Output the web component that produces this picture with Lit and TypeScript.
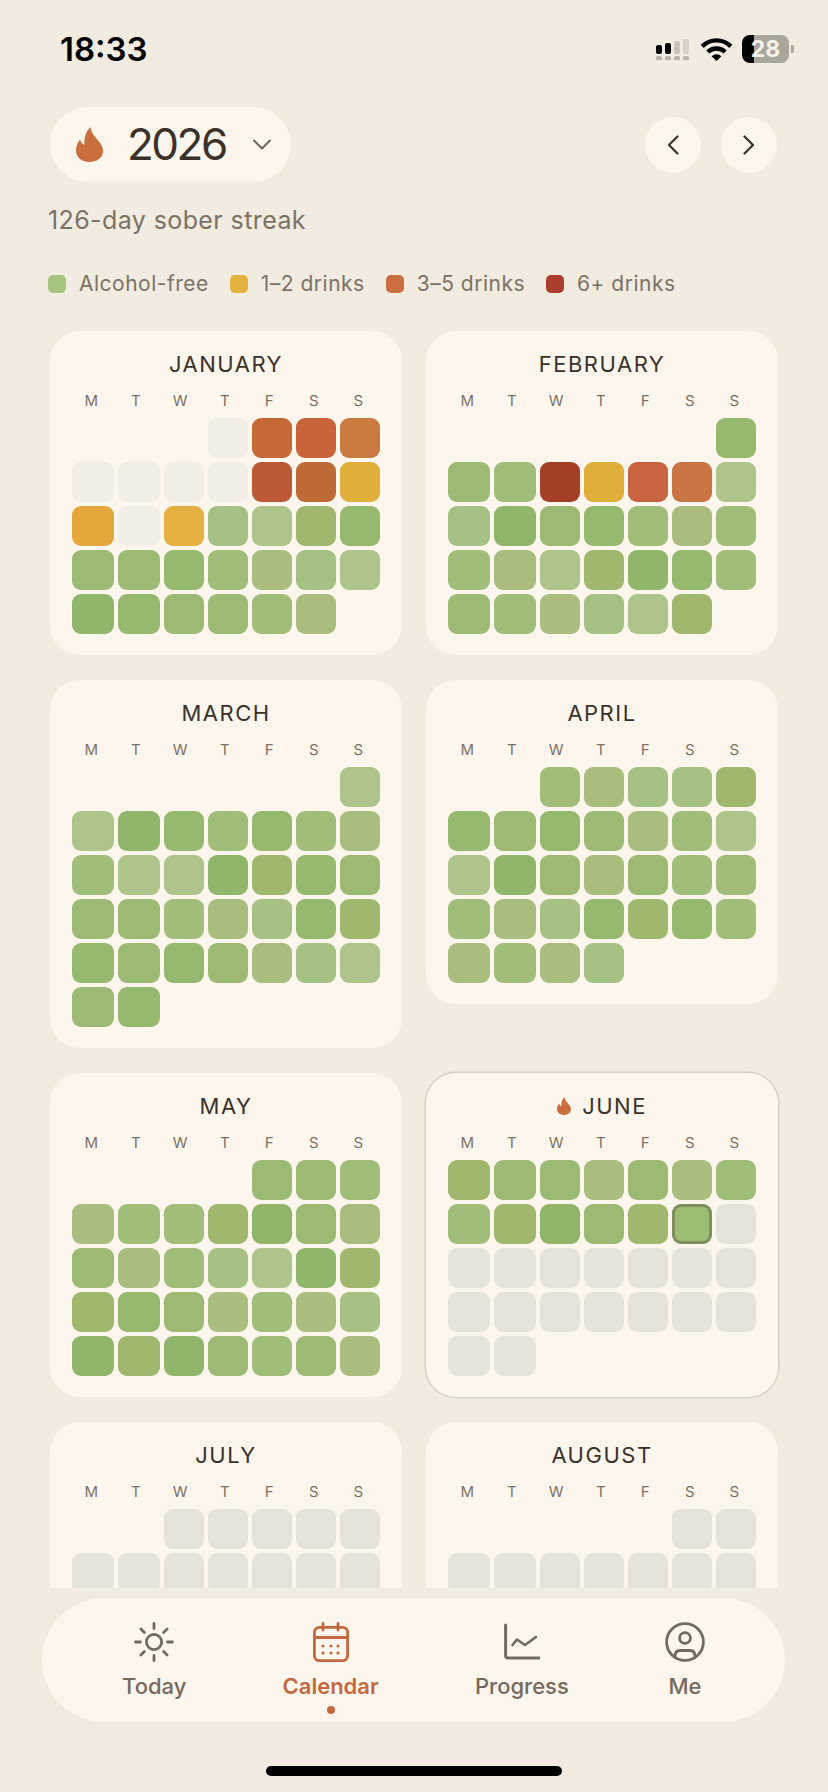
import { LitElement, html, css, svg } from "lit";
import { customElement } from "lit/decorators.js";

const SHADES: Record<string, string> = {
  a: "#8fb66b", b: "#96b86f", c: "#9cba74", d: "#a1bd7a", e: "#a6c184", f: "#adc58a", g: "#9fb86d", h: "#a9bd7f",
  "1": "#c56a36", "2": "#c9633a", "3": "#c97a41", "4": "#bb5a35", "5": "#bd6a36",
  "6": "#e0ae3a", "7": "#e5a83d", "8": "#e7b043", "9": "#a23f26", "0": "#c96340", y: "#c97543",
  x: "#f2eee6", z: "#e6e4da", J: "#9dbc74",
};

// one string per week, monday first. "." is a slot outside the month, J is today
const MONTHS = [
  { name: "JANUARY", weeks: ["...x123", "xxxx456", "7x8efgb", "ccbdhef", "abccdh."] },
  { name: "FEBRUARY", weeks: ["......b", "cd960yf", "eacbdhd", "dhfgabd", "cdhefg."] },
  { name: "MARCH", weeks: ["......f", "fabdbdh", "dffagbc", "ccdhebg", "bcbchef", "cb....."] },
  { name: "APRIL", weeks: ["..dheeg", "bcbchdf", "fachcdd", "dhebgbd", "hdhe..."] },
  { name: "MAY", weeks: ["....ccd", "hddgach", "chdefag", "gbchdhe", "agacdch"] },
  { name: "JUNE", current: true, weeks: ["gcchchd", "dgacgJz", "zzzzzzz", "zzzzzzz", "zz....."] },
  { name: "JULY", weeks: ["..zzzzz", "zzzzzzz", "zzzzzzz", "zzzzzzz", "zzzzz.."] },
  { name: "AUGUST", weeks: [".....zz", "zzzzzzz", "zzzzzzz", "zzzzzzz", "zzzzzzz", "z......"] },
];

const DAYS = ["M", "T", "W", "T", "F", "S", "S"];

const FLAME = svg`<path fill="#c96f3e" d="M14.5 0C15 6 19 9.5 23 14.5C25.8 18 27 21 27 24C27 30.5 21 35 13.5 35C6 35 0 30.5 0 23.5C0 19.5 1.5 15.5 4 12.5C4.8 15 6 17 8.6 18C7.6 12 9.5 5 14.5 0Z"/>`;

const LEGEND = [
  ["#a5c47f", "Alcohol-free"],
  ["#e4b23c", "1–2 drinks"],
  ["#cb6f41", "3–5 drinks"],
  ["#ac3c2b", "6+ drinks"],
];

@customElement("app-root")
export class AppRoot extends LitElement {
  static styles = css`
    :host {
      display: flex;
      flex-direction: column;
      height: 1792px;
      overflow: hidden;
      background: #f2ebdf;
      font-family: Inter, "Liberation Sans", sans-serif;
      color: #3a322a;
    }
    .status {
      display: flex;
      justify-content: space-between;
      align-items: center;
      height: 28px;
      margin: 35px 34px 44px 60px;
    }
    .time {
      font-size: 33px;
      font-weight: 600;
      color: #000;
    }
    .status-icons {
      display: flex;
      align-items: center;
      gap: 9px;
    }
    .battery {
      display: flex;
      align-items: center;
      gap: 2px;
    }
    .battery-body {
      width: 47px;
      height: 28px;
      border-radius: 8px;
      background: linear-gradient(90deg, #000 26%, #aba69c 26%);
      color: #f6f2ea;
      font-size: 23px;
      font-weight: 700;
      line-height: 28px;
      text-align: center;
    }
    .battery-nub {
      width: 3px;
      height: 8px;
      border-radius: 0 2px 2px 0;
      background: #aba69c;
    }
    .head {
      display: flex;
      justify-content: space-between;
      align-items: center;
      height: 75px;
      padding: 0 51px 0 50px;
    }
    .pill {
      display: flex;
      align-items: center;
      width: 241px;
      height: 75px;
      box-sizing: border-box;
      padding-left: 26px;
      border-radius: 38px;
      background: #fcf6ed;
    }
    .year {
      margin: 0 27px 0 24px;
      font-size: 44px;
      letter-spacing: -2.5px;
      line-height: 75px;
    }
    .nav {
      display: flex;
      gap: 20px;
    }
    .round {
      display: flex;
      align-items: center;
      justify-content: center;
      width: 56px;
      height: 56px;
      border-radius: 50%;
      background: #fcf6ed;
    }
    .sub {
      margin: 23px 0 0 48px;
      font-size: 25px;
      letter-spacing: 0.4px;
      line-height: 30px;
      color: #7b7266;
    }
    .legend {
      display: flex;
      gap: 21px;
      margin: 37px 0 35px 48px;
      font-size: 21px;
      letter-spacing: 0.5px;
      line-height: 24px;
      color: #7b7266;
    }
    .legend-item {
      display: flex;
      align-items: center;
      gap: 13px;
    }
    .swatch {
      width: 18px;
      height: 18px;
      border-radius: 5px;
    }
    .scroll {
      flex: 1;
      min-height: 0;
      overflow: hidden;
      padding: 0 50px;
    }
    .months {
      display: grid;
      grid-template-columns: 352px 352px;
      column-gap: 24px;
      row-gap: 25px;
      align-items: start;
    }
    .card {
      box-sizing: border-box;
      padding: 20px 22px 21px;
      border-radius: 30px;
      background: #fcf6ed;
    }
    .card.current {
      box-shadow: 0 0 0 1.5px #d9d0c4;
    }
    .title {
      display: flex;
      align-items: center;
      justify-content: center;
      gap: 11px;
      height: 26px;
      font-size: 22px;
      letter-spacing: 1.5px;
    }
    .days {
      display: grid;
      grid-template-columns: repeat(7, 44.5px);
      margin: 14px 0 0 -3px;
      font-size: 15px;
      line-height: 20px;
      text-align: center;
      color: #7b7266;
    }
    .cells {
      display: grid;
      grid-template-columns: 42px 42px repeat(5, 40px);
      grid-auto-rows: 40px;
      gap: 4px;
      margin-top: 7px;
    }
    .cell {
      box-sizing: border-box;
      border-radius: 9px;
    }
    .cell.today {
      border: 3px solid #7a8f5c;
    }
    .tabs {
      display: flex;
      justify-content: space-between;
      align-items: flex-start;
      flex: none;
      height: 124px;
      box-sizing: border-box;
      margin: 10px 43px 0 42px;
      padding: 24px 80px 0 80px;
      border-radius: 62px;
      background: #fcf6ed;
    }
    .tab {
      display: flex;
      flex-direction: column;
      align-items: center;
      color: #736a5e;
      font-size: 22px;
      font-weight: 500;
      line-height: 26px;
    }
    .tab svg {
      margin-bottom: 11px;
    }
    .tab.active {
      color: #c4693f;
      font-weight: 600;
    }
    .dot {
      width: 8px;
      height: 8px;
      margin-top: 7px;
      border-radius: 50%;
      background: #c4693f;
    }
    .home {
      flex: none;
      width: 296px;
      height: 10px;
      margin: 44px 0 16px 266px;
      border-radius: 5px;
      background: #000;
    }
  `;

  renderMonth(m: (typeof MONTHS)[number]) {
    return html`
      <section class="card ${m.current ? "current" : ""}">
        <div class="title">
          ${m.current ? html`<svg width="14" height="18" viewBox="0 0 27 35">${FLAME}</svg>` : ""}
          <span>${m.name}</span>
        </div>
        <div class="days">${DAYS.map((d) => html`<span>${d}</span>`)}</div>
        <div class="cells">
          ${m.weeks.flatMap((w) => [...w]).map((c) =>
            c === "."
              ? html`<span></span>`
              : html`<span class="cell ${c === "J" ? "today" : ""}" style="background:${SHADES[c]}"></span>`
          )}
        </div>
      </section>
    `;
  }

  render() {
    return html`
      <div class="status">
        <span class="time">18:33</span>
        <div class="status-icons">
          <svg width="35" height="21" viewBox="0 0 35 21">
            <rect x="0" y="6" width="6" height="9" rx="2" fill="#000"/>
            <rect x="9" y="4" width="6" height="11" rx="2" fill="#000"/>
            <rect x="18" y="2" width="6" height="13" rx="2" fill="#c9c4ba"/>
            <rect x="27" y="0" width="6" height="15" rx="2" fill="#d6d1c7"/>
            <rect x="0" y="17" width="6" height="5" rx="1.5" fill="#b9b4aa"/>
            <rect x="9" y="17" width="6" height="5" rx="1.5" fill="#b9b4aa"/>
            <rect x="18" y="17" width="6" height="5" rx="1.5" fill="#b9b4aa"/>
            <rect x="27" y="17" width="6" height="5" rx="1.5" fill="#b9b4aa"/>
          </svg>
          <svg width="33" height="24" viewBox="0 0 33 24" fill="none" stroke="#000" stroke-width="4.4">
            <path d="M2.2 9.4A20 20 0 0 1 30.8 9.4"/>
            <path d="M7.8 15A12.4 12.4 0 0 1 25.2 15"/>
            <path d="M11.6 19.2A7 7 0 0 1 21.4 19.2L16.5 24Z" fill="#000" stroke="none"/>
          </svg>
          <div class="battery">
            <div class="battery-body">28</div>
            <div class="battery-nub"></div>
          </div>
        </div>
      </div>

      <div class="head">
        <div class="pill">
          <svg width="27" height="35" viewBox="0 0 27 35">${FLAME}</svg>
          <span class="year">2026</span>
          <svg width="18" height="11" viewBox="0 0 18 11" fill="none" stroke="#6e6559" stroke-width="2" stroke-linecap="round" stroke-linejoin="round">
            <path d="M1 1.5L9 9.5L17 1.5"/>
          </svg>
        </div>
        <div class="nav">
          <div class="round">
            <svg width="12" height="20" viewBox="0 0 12 20" fill="none" stroke="#3a322a" stroke-width="2.2" stroke-linecap="round" stroke-linejoin="round">
              <path d="M10.5 1.5L2 10L10.5 18.5"/>
            </svg>
          </div>
          <div class="round">
            <svg width="12" height="20" viewBox="0 0 12 20" fill="none" stroke="#3a322a" stroke-width="2.2" stroke-linecap="round" stroke-linejoin="round">
              <path d="M1.5 1.5L10 10L1.5 18.5"/>
            </svg>
          </div>
        </div>
      </div>

      <div class="sub">126-day sober streak</div>

      <div class="legend">
        ${LEGEND.map(
          ([color, label]) => html`
            <div class="legend-item">
              <span class="swatch" style="background:${color}"></span>
              <span>${label}</span>
            </div>
          `
        )}
      </div>

      <div class="scroll">
        <div class="months">${MONTHS.map((m) => this.renderMonth(m))}</div>
      </div>

      <nav class="tabs">
        <div class="tab">
          <svg width="40" height="40" viewBox="0 0 40 40" fill="none" stroke="currentColor" stroke-width="2.8" stroke-linecap="round">
            <circle cx="20" cy="20" r="7.6"/>
            <path d="M20 1.5V6.5M20 33.5V38.5M1.5 20H6.5M33.5 20H38.5M6.9 6.9L10.4 10.4M29.6 29.6L33.1 33.1M6.9 33.1L10.4 29.6M29.6 10.4L33.1 6.9"/>
          </svg>
          <span>Today</span>
        </div>
        <div class="tab active">
          <svg width="36" height="40" viewBox="0 0 36 40" fill="none" stroke="currentColor" stroke-width="2.8" stroke-linecap="round">
            <rect x="1.4" y="5.4" width="33.2" height="33.2" rx="5"/>
            <path d="M1.4 15.5H34.6M10 1.4V8M25 1.4V8"/>
            <g fill="currentColor" stroke="none">
              <circle cx="10" cy="24" r="1.6"/><circle cx="18" cy="24" r="1.6"/><circle cx="25" cy="24" r="1.6"/>
              <circle cx="10" cy="31" r="1.6"/><circle cx="18" cy="31" r="1.6"/><circle cx="25" cy="31" r="1.6"/>
            </g>
          </svg>
          <span>Calendar</span>
          <span class="dot"></span>
        </div>
        <div class="tab">
          <svg width="36" height="40" viewBox="0 0 36 40" fill="none" stroke="currentColor" stroke-linecap="round" stroke-linejoin="round">
            <path d="M1.6 3V33.4C1.6 35 2.4 36 4 36H35" stroke-width="3"/>
            <path d="M8.5 23L13 17.5L21 23L32 15" stroke-width="2.6"/>
          </svg>
          <span>Progress</span>
        </div>
        <div class="tab">
          <svg width="40" height="40" viewBox="0 0 40 40" fill="none" stroke="currentColor" stroke-width="2.8" stroke-linecap="round">
            <circle cx="20" cy="20" r="18.4"/>
            <circle cx="20" cy="16" r="5.4"/>
            <path d="M10 34.5C10 30.5 12 28.5 15 28.5H25C28 28.5 30 30.5 30 34.5"/>
          </svg>
          <span>Me</span>
        </div>
      </nav>

      <div class="home"></div>
    `;
  }
}
